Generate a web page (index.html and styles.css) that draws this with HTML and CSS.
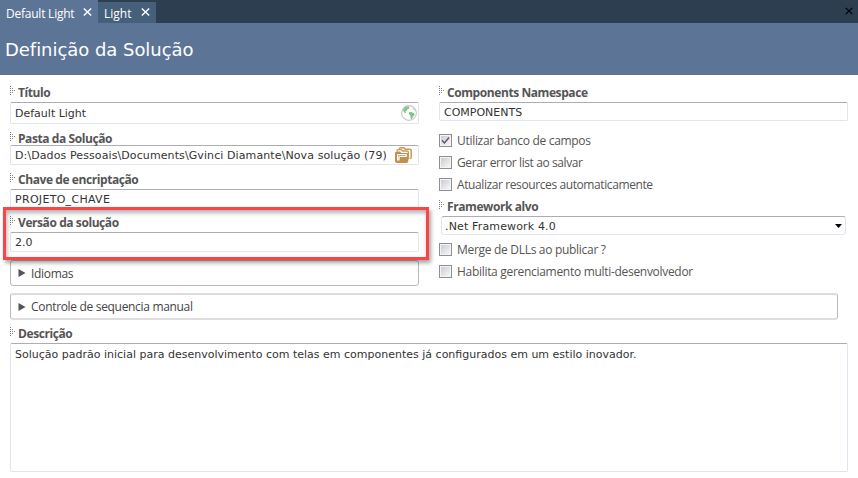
FILE: index.html
```html
<!DOCTYPE html>
<html lang="pt-BR">
<head>
<meta charset="utf-8">
<title>Definição da Solução</title>
<link rel="stylesheet" href="styles.css">
</head>
<body>
<svg width="0" height="0" class="defs">
  <symbol id="x" viewBox="0 0 9 8"><path d="M.8.5 8.200 7.500M8.200.5.8 7.500" fill="none" stroke="currentColor" stroke-width="1.400"/></symbol>
  <symbol id="grip" viewBox="0 0 5 9"><path d="M.5 0v9" stroke="#777" stroke-dasharray="1 1"/><path d="M2.500 2v6" stroke="#888" stroke-dasharray="1 1"/><path d="M4.500 4v1" stroke="#888"/></symbol>
  <symbol id="tri" viewBox="0 0 8 8"><path d="M.5 0 7.500 4 .5 8z" fill="#555"/></symbol>
</svg>
<nav class="tabs">
  <div class="tab active"><span>Default Light</span><svg class="x"><use href="#x"/></svg></div>
  <div class="tab"><span>Light</span><svg class="x"><use href="#x"/></svg></div>
  <svg class="x close"><use href="#x"/></svg>
</nav>
<header><h1>Definição da Solução</h1></header>
<main>
  <div class="cols">
    <section class="left">
      <div class="label"><svg class="grip"><use href="#grip"/></svg><span>Título</span></div>
      <div class="input tall"><span>Default Light</span>
        <svg class="globe" viewBox="0 0 16 16"><circle cx="8" cy="8" r="7.400" fill="#fff" stroke="#c6c9c6" stroke-width="1.100"/><path d="M2 4.400 4.500 2l3-.7 1 1.200-1 1.600-1.500.5-.4 1.500-1.400.4 1 1.300-1 .4L2.600 6.500zM8 7.300l2-.6 3 1.500.8 1.300-1.600 2-1.400 2.500-1.200-.5-.2-2.800L8 9.300z" fill="#86c28b"/><path d="m11 2 2.500 1.700 1 2-1.500-.4z" fill="#b8dcba"/></svg>
      </div>
      <div class="label short"><svg class="grip"><use href="#grip"/></svg><span>Pasta da Solução</span></div>
      <div class="input path"><span>D:\Dados Pessoais\Documents\Gvinci Diamante\Nova solução (79)</span>
        <svg class="folder" viewBox="0 0 17 16"><path d="M4.500 2.500V1.800Q4.500.8 5.500.8H9l1.200 1.400H15q1.200 0 1.200 1.200v6.800q0 1.300-1.500 1.300" fill="none" stroke="#c69a58" stroke-width="1.500"/><path d="M2.200 4.500v-.8q0-1 1-1h3L7.500 4h4.700q1.200 0 1.200 1.200v7" fill="none" stroke="#c69a58" stroke-width="1.300"/><path d="M0 6q0-1.500 1.500-1.500H5L6.300 6H12q1.300 0 1.300 1.300V14q0 2-2 2H2q-2 0-2-2z" fill="#be9150"/><path d="M2.600 13.500V8.500q0-.8.8-.8h7.800v1.800H5q-1 0-1 1v3" fill="none" stroke="#fff" stroke-width="1.200"/></svg>
      </div>
      <div class="label gap4"><svg class="grip"><use href="#grip"/></svg><span>Chave de encriptação</span></div>
      <div class="input key"><span>PROJETO_CHAVE</span></div>
      <div class="label gap3"><svg class="grip"><use href="#grip"/></svg><span>Versão da solução</span></div>
      <div class="input"><span>2.0</span></div>
      <div class="expander lang"><svg class="tri"><use href="#tri"/></svg><span>Idiomas</span></div>
      <div class="highlight"></div>
    </section>
    <section class="right">
      <div class="label"><svg class="grip"><use href="#grip"/></svg><span>Components Namespace</span></div>
      <div class="input ns-input"><span>COMPONENTS</span></div>
      <div class="checks first">
        <div class="check"><i class="box"><svg viewBox="0 0 9 9"><path d="M1 4.200 3.500 7 8 1.500" fill="none" stroke="#55555d" stroke-width="1.300"/></svg></i><span>Utilizar banco de campos</span></div>
        <div class="check tight"><i class="box"></i><span>Gerar error list ao salvar</span></div>
        <div class="check tight"><i class="box"></i><span>Atualizar resources automaticamente</span></div>
      </div>
      <div class="label fw"><svg class="grip"><use href="#grip"/></svg><span>Framework alvo</span></div>
      <div class="input select"><span>.Net Framework 4.0</span><svg class="arrow" viewBox="0 0 7 4"><path d="M0 0h7L3.500 4z"/></svg></div>
      <div class="checks second">
        <div class="check"><i class="box"></i><span>Merge de DLLs ao publicar ?</span></div>
        <div class="check"><i class="box"></i><span>Habilita gerenciamento multi-desenvolvedor</span></div>
      </div>
    </section>
  </div>
  <div class="expander manual"><svg class="tri"><use href="#tri"/></svg><span>Controle de sequencia manual</span></div>
  <div class="label desc"><svg class="grip"><use href="#grip"/></svg><span>Descrição</span></div>
  <div class="input area"><span>Solução padrão inicial para desenvolvimento com telas em componentes já configurados em um estilo inovador.</span></div>
</main>
</body>
</html>
```
FILE: styles.css
```css
* { box-sizing: border-box; }
body { margin: 0; width: 858px; height: 478px; overflow: hidden; background: #fff; color: #444; font: 12px/16px "Open Sans", "Noto Sans", sans-serif; white-space: nowrap; }
svg { display: block; flex: none; }
.defs { position: absolute; }
.tabs { height: 23px; display: flex; align-items: flex-end; background: #2d3e50; color: #fff; }
.tab { height: 21px; width: 58px; padding: 2px 6px 0 6px; display: flex; align-items: center; justify-content: space-between; background: #465f7b; }
.tab.active { height: 23px; width: 98px; padding: 4px 6px 0; background: #5c7596; letter-spacing: -.23px; }
.tab .x { margin-bottom: 3px; }
.x { width: 9px; height: 8px; }
.close { margin: 0 5px 8px auto; width: 8px; color: #000; }
header { height: 52px; padding: 16px 5px 0; background: #5c7596; color: #fff; }
h1 { margin: 0; font: 18px/22px "DejaVu Sans", sans-serif; letter-spacing: -.04px; }
main { padding: 7px 10px 0; }
.cols { display: flex; gap: 20px; height: 211px; }
.left { width: 409px; position: relative; }
.right { width: 409px; }
.label { height: 20px; display: flex; align-items: center; gap: 3px; font-weight: 700; color: #555; letter-spacing: -.42px; }
.label span { padding-top: 1px; }
.label.short { height: 14px; margin-top: 7px; }
.gap4 { margin-top: 4px; }
.gap3 { margin-top: 3px; }
.grip { width: 5px; height: 9px; margin-bottom: 3px; }
.input { height: 20px; display: flex; align-items: center; justify-content: space-between; padding: 0 4px; border: 1px solid #e1e5ee; border-top-color: #abadb3; border-radius: 2px; font: 11px/14px "DejaVu Sans", sans-serif; color: #333; }
.input span { padding-top: 2px; }
.tall { height: 22px; padding-right: 1px; }
.path { padding-right: 6px; letter-spacing: .1px; }
.path span { padding-top: 1px; }
.key { letter-spacing: .3px; }
.globe { width: 16px; height: 16px; }
.folder { width: 17px; height: 16px; }
.expander { display: flex; align-items: center; gap: 5px; padding-left: 7px; border: 1px solid #b9b9b9; border-radius: 3px; letter-spacing: -.32px; }
.tri { width: 8px; height: 8px; }
.lang { height: 26px; margin-top: 8px; }
.lang span { padding-top: 2px; }
.highlight { position: absolute; left: -7px; top: 125px; width: 426px; height: 53px; border: 3px solid #fb4444; box-shadow: 2px 3px 4px rgba(0,0,0,.35), inset 1px 3px 4px rgba(0,0,0,.3); }
.ns-input { height: 19px; }
.checks { display: flex; flex-direction: column; gap: 9px; }
.first { margin-top: 13px; }
.second { margin-top: 8px; }
.check { height: 13px; display: flex; align-items: center; gap: 5px; color: #555; letter-spacing: -.3px; }
.tight { letter-spacing: -.4px; }
.box { width: 13px; height: 13px; flex: none; border: 1px solid #8e8f8f; padding: 1px; background: linear-gradient(135deg, #c9cdd5, #f6f6f6) content-box, #f4f4f4; }
.box svg { width: 9px; height: 9px; }
.fw { margin-top: 5px; }
.select { width: 405px; height: 19px; margin-left: 2px; padding: 0 3px; border-radius: 3px; letter-spacing: .15px; }
.arrow { width: 7px; height: 4px; }
.manual { width: 828px; height: 27px; border-top: 2px solid #ddd; border-bottom: 2px solid #ddd; }
.manual span { padding-top: 1px; }
.desc { margin-top: 3px; }
.area { height: 129px; align-items: flex-start; padding-top: 2px; }
```
